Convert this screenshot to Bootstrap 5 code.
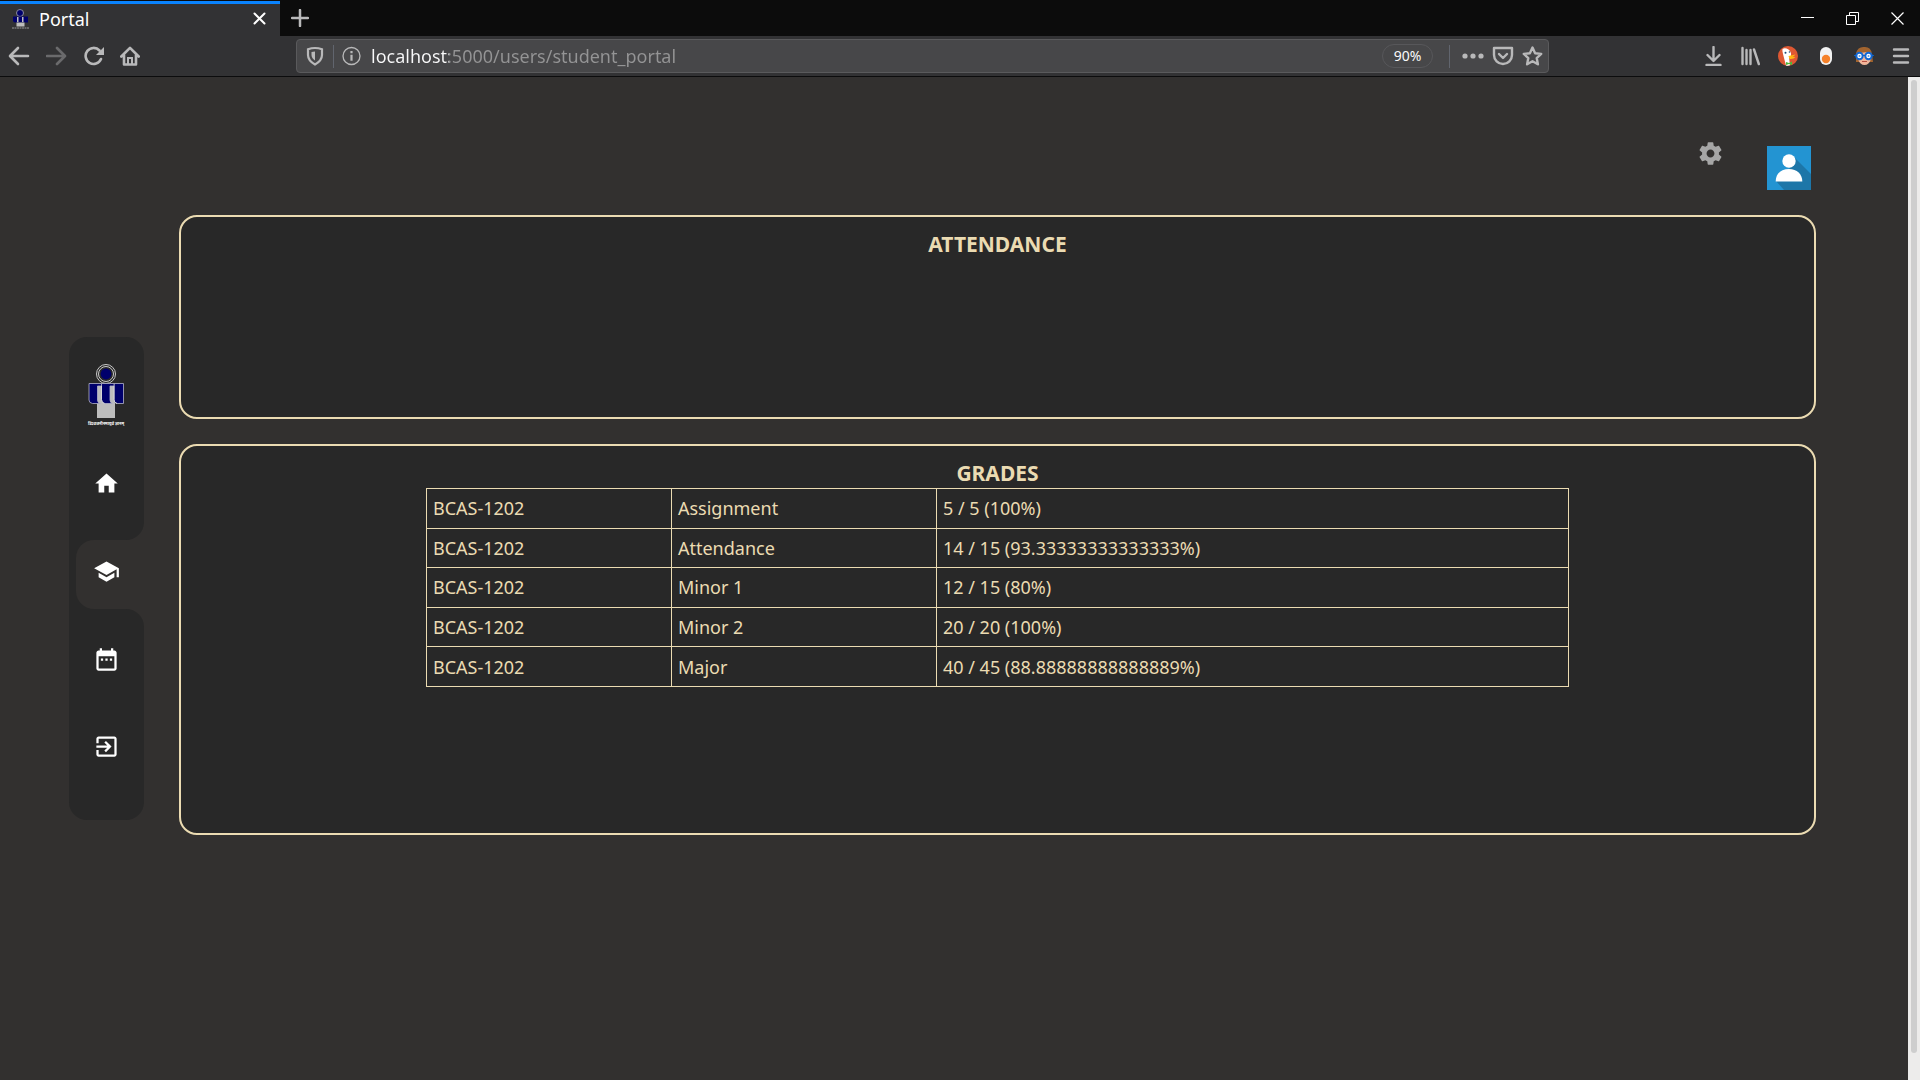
<!DOCTYPE html>
<html lang="en">
<head>
<meta charset="utf-8">
<meta name="viewport" content="width=device-width, initial-scale=1">
<title>Portal</title>
<link href="https://cdn.jsdelivr.net/npm/bootstrap@5.3.0/dist/css/bootstrap.min.css" rel="stylesheet">
<style>
  :root { --page: #32302f; --panel: #282828; --sand: #ebdbb2; --chrome: #323234; --glyph: #b9b9ba; }
  body { font-family: "Noto Sans", sans-serif; font-size: 18px; line-height: 24px; background: var(--page); color: var(--sand); }
  svg { display: block; flex: none; }
  button { background: none; border: 0; padding: 0; color: inherit; }

  /* browser chrome */
  .titlebar { height: 36px; background: #0c0c0c; color: #fff; }
  .tab-active { width: 280px; margin-top: 1px; border-top: 3px solid #0a84ff; background: var(--chrome); padding: 0 14px 3px 11px; }
  .tab-label { margin-left: 10px; }
  .tab-new { margin-left: 11px; color: var(--glyph); }
  .win-buttons { gap: 32px; padding-right: 16px; }
  .toolbar { height: 41px; background: var(--chrome); border-bottom: 1px solid #0c0c0d; color: var(--glyph); padding: 0 10px 0 8px; }
  .tool-nav { width: 288px; gap: 16px; }
  .urlbar { width: 1253px; height: 34px; background: #474749; border: 1px solid #5a5a5c; border-radius: 4px; padding: 0 5px 0 8px; }
  .rule { width: 1px; height: 23px; background: #61656e; }
  .url-input { border: 0; outline: 0; margin: 0 8px 0 9px; padding: 0; height: 28px; min-width: 0; color: transparent; caret-color: #fff;
    background: linear-gradient(to right, #f9f9fa 78px, #949495 78px); -webkit-background-clip: text; background-clip: text; }
  .zoom-pill { width: 51px; height: 24px; border: 1px solid #57575a; border-radius: 12px; font-size: 14px; line-height: 20px; color: #f9f9fa; }
  .tool-end { gap: 18px; }

  /* page */
  .portal { padding-left: 69px; }
  .side { width: 75px; flex: none; }
  .side a { height: 87px; color: #fff; }
  .side-top { background: var(--panel); border-radius: 18px 18px 18px 0; padding: 27px 0 13px; }
  .side-top .crest { margin-bottom: 14px; }
  .side-now { background: linear-gradient(to right, var(--panel) 50%, transparent 50%); padding-left: 7px; }
  .side-now a { height: 69px; background: var(--page); border-radius: 18px 0 0 18px; padding: 0 7px 6px 0; }
  .side-end { background: var(--panel); border-radius: 0 18px 18px 18px; padding: 7px 0 30px; }
  .board { margin: 0 92px 0 35px; }
  .board-tools { height: 138px; padding: 63px 5px 0 0; gap: 43px; color: #a6a6a6; }
  .board-tools .avatar { margin-top: 6px; }
  .panel { background: var(--panel); border: 2px solid var(--sand); border-radius: 18px; padding: 12px 16px; }
  .panel h2 { font-size: 21px; line-height: 30px; font-weight: 700; margin: 0; text-align: center; }
  .panel-attendance { min-height: 204px; margin-bottom: 25px; }
  .panel-grades { min-height: 391px; padding-left: 0; padding-right: 0; }
  .grades { width: 70%; height: 199px; table-layout: fixed; border-collapse: collapse; margin: 0 auto; }
  .grades td { border: 1px solid var(--sand); padding: 0 6px; }
  .col-course { width: 245px; }
  .col-work { width: 265px; }
  .scroll-track { width: 12px; flex: none; background: #edeceb; padding: 3px 3px 27px; }
  .scroll-thumb { background: #cecece; border-radius: 3px; }
</style>
</head>
<body class="vh-100 d-flex flex-column overflow-hidden">

<svg width="0" height="0" class="position-absolute" aria-hidden="true">
  <symbol id="crest" viewBox="0 0 40 62">
    <circle cx="20" cy="10" r="9.500" fill="#282828" stroke="#c9c9c9" stroke-width="1"/>
    <circle cx="20" cy="10" r="7.500" fill="none" stroke="#c9c9c9" stroke-width="1"/>
    <circle cx="20" cy="10" r="5.400" fill="#00006b"/>
    <path d="M11 22h18v32H11z" fill="#bdbdbd"/>
    <g fill="#00006b" stroke="#b4b4c8" stroke-width=".8">
      <path d="M28 19.500h9.500v20H31q-3-.5-3-3.500z"/>
      <path d="M15.500 19.500h12.500v2.500h-4v14q0 3 3 3.500h-8q-3.500-.5-3.500-3.500z"/>
      <path d="M3 19.500h12.500v2.500h-4v14q0 3 3 3.500H6.500Q3 39 3 36z"/>
    </g>
    <path d="M15.500 22v13.500q0 3.500 3 4M28 22v13.500q0 3.500 3 4" fill="none" stroke="#d8d8d8"/>
  </symbol>
</svg>

<header>
  <div class="titlebar d-flex">
    <div class="tab-active d-flex align-items-center">
      <svg width="18" height="20" viewBox="0 0 18 20"><circle cx="9" cy="4" r="3.500" fill="#00006b" stroke="#8b8b9c"/><path d="M2 7.500h15v6H4q-2 0-2-2z" fill="#00006b"/><path d="M5.500 13.500h8v4h-8zM6 8h1.500v5H6zM11 8h1.500v5H11z" fill="#bdbdbd"/><path d="M1 19h17" stroke="#999" stroke-dasharray="2 .5"/></svg>
      <span class="tab-label flex-grow-1">Portal</span>
      <button aria-label="Close tab"><svg width="13" height="13" viewBox="0 0 13 13"><path d="M1.500 1.500l10 10m0-10l-10 10" stroke="#fff" stroke-width="2" stroke-linecap="round"/></svg></button>
    </div>
    <button class="tab-new" aria-label="New tab"><svg width="18" height="18" viewBox="0 0 18 18"><path d="M9 1v16M1 9h16" stroke="currentColor" stroke-width="2.500" stroke-linecap="round"/></svg></button>
    <div class="win-buttons d-flex align-items-center ms-auto">
      <button aria-label="Minimize"><svg width="13" height="14" viewBox="0 0 13 14"><path d="M0 6.500h13" stroke="#fff"/></svg></button>
      <button aria-label="Restore"><svg width="13" height="13" viewBox="0 0 13 13"><path d="M.5 3.500h9v9h-9zM3.500 3.500v-3h9v9h-3" fill="none" stroke="#fff"/></svg></button>
      <button aria-label="Close window"><svg width="13" height="13" viewBox="0 0 13 13"><path d="M.5.5l12 12m0-12l-12 12" stroke="#fff" stroke-width="1.200"/></svg></button>
    </div>
  </div>

  <div class="toolbar d-flex align-items-center">
    <nav class="tool-nav d-flex align-items-center" aria-label="Browser">
      <button aria-label="Back"><svg width="22" height="20" viewBox="0 0 22 20"><path d="M20 10H2.500M10 2L2 10l8 8" fill="none" stroke="currentColor" stroke-width="2.600" stroke-linecap="round" stroke-linejoin="round"/></svg></button>
      <button aria-label="Forward"><svg width="22" height="20" viewBox="0 0 22 20" opacity=".42"><path d="M1 10h17.500M11 2l8 8-8 8" fill="none" stroke="currentColor" stroke-width="2.600" stroke-linecap="round" stroke-linejoin="round"/></svg></button>
      <button aria-label="Reload"><svg width="20" height="20" viewBox="0 0 20 20"><path d="M15.500 4.500A8 8 0 1 0 17 13" fill="none" stroke="currentColor" stroke-width="2.600" stroke-linecap="round"/><path d="M20 1v8h-8z" fill="currentColor"/></svg></button>
      <button aria-label="Home"><svg width="20" height="20" viewBox="0 0 20 20"><path d="M1.300 10.500L10 1.800l8.700 8.700M4 9v9.500h12V9" fill="none" stroke="currentColor" stroke-width="2.600" stroke-linecap="round" stroke-linejoin="round"/><path d="M8 18v-6h4v6" fill="none" stroke="currentColor" stroke-width="2"/></svg></button>
    </nav>

    <div class="urlbar d-flex align-items-center">
      <svg width="20" height="20" viewBox="0 0 20 20"><path d="M10 2q3.500 0 7 1.300V9q0 5.500-7 9.500-7-4-7-9.500V3.300Q6.500 2 10 2z" fill="none" stroke="currentColor" stroke-width="2.200"/><path d="M10 5.500v9Q6.500 12 6.500 9V6z" fill="currentColor"/></svg>
      <div class="rule ms-2 me-2"></div>
      <svg width="20" height="20" viewBox="0 0 20 20"><circle cx="9.500" cy="10" r="8.500" fill="none" stroke="currentColor" stroke-width="1.300"/><path d="M9.500 8.800v6M9.500 5v2.200" stroke="currentColor" stroke-width="2.200"/></svg>
      <input class="url-input flex-grow-1" type="text" value="localhost:5000/users/student_portal" aria-label="Address">
      <button class="zoom-pill me-3">90%</button>
      <div class="rule me-2"></div>
      <button class="ms-1" aria-label="Page actions"><svg width="22" height="20" viewBox="0 0 22 20"><g fill="currentColor"><circle cx="3" cy="10" r="2.600"/><circle cx="11" cy="10" r="2.600"/><circle cx="19" cy="10" r="2.600"/></g></svg></button>
      <button class="ms-2" aria-label="Save to Pocket"><svg width="22" height="20" viewBox="0 0 22 20"><path d="M2 2h18v7a9 9 0 0 1-18 0zM7 8l4 4 4-4" fill="none" stroke="currentColor" stroke-width="2.400" stroke-linejoin="round" stroke-linecap="round"/></svg></button>
      <button class="ms-2" aria-label="Bookmark"><svg width="21" height="20" viewBox="0 0 21 20"><path d="M10.500 1.500l2.600 5.700 6.100.7-4.500 4.200 1.200 6.200-5.400-3.100-5.400 3.100 1.200-6.200-4.500-4.200 6.100-.7z" fill="none" stroke="currentColor" stroke-width="2.400" stroke-linejoin="round"/></svg></button>
    </div>

    <div class="tool-end d-flex align-items-center ms-auto">
      <button aria-label="Downloads"><svg width="18" height="20" viewBox="0 0 18 20"><path d="M9.500 1v13M3.500 9l6 6 6-6M2.500 19h14" fill="none" stroke="currentColor" stroke-width="2.400" stroke-linecap="round" stroke-linejoin="round"/></svg></button>
      <button aria-label="Library"><svg width="20" height="20" viewBox="0 0 20 20"><path d="M2.500 2v16M6.500 4v14M10.500 4v14M14 3.500L18.800 18" fill="none" stroke="currentColor" stroke-width="2.400" stroke-linecap="round"/></svg></button>
      <button aria-label="Privacy"><svg width="20" height="20" viewBox="0 0 20 20"><circle cx="10" cy="10" r="10" fill="#de5833"/><path d="M4.500 3Q7 1.500 10.500 3.500q3 2 2.500 6l-2 2 1 7.800Q10 20 8 19.500 6 12 5 8 4 5 4.500 3z" fill="#fff"/><path d="M10.500 10l7-1.500q-1 1.500-3 2l3 .5q-2 2.500-6 2z" fill="#fdb913"/><path d="M8 16l3 1 3-1.500v3.500l-3-1-3 1z" fill="#4cba3c"/><circle cx="7.500" cy="6.700" r="1" fill="#234a75"/><circle cx="11.500" cy="6" r=".8" fill="#234a75"/></svg></button>
      <button class="px-1" aria-label="Toggle extension"><svg width="12" height="18" viewBox="0 0 12 18"><rect width="12" height="18" rx="6" fill="#f2f2f2"/><circle cx="6" cy="12" r="4.200" fill="#f5812a"/></svg></button>
      <button aria-label="Profile extension"><svg width="20" height="20" viewBox="0 0 20 20"><path d="M2 7Q4 0 11 1q6 0 7 7l1 8H2z" fill="#a2642f"/><path d="M4 8q6-3 13-1v6q-2 6-6.500 6T4 13z" fill="#f0b59a"/><path d="M8 15.500h5" stroke="#b94f42"/><path d="M0 9.500h20" stroke="#0b5fc2"/><g fill="#fff" stroke="#1268d3" stroke-width="2"><circle cx="5.500" cy="10" r="3.200"/><circle cx="14.500" cy="10" r="3.200"/></g><g fill="#5d9be6"><circle cx="5.500" cy="10" r="1"/><circle cx="14.500" cy="10" r="1"/></g></svg></button>
      <button aria-label="Menu"><svg width="18" height="20" viewBox="0 0 18 20"><path d="M2 3.500h14M2 10h14M2 16.500h14" stroke="currentColor" stroke-width="2.400" stroke-linecap="round"/></svg></button>
    </div>
  </div>
</header>

<div class="d-flex flex-grow-1">
  <div class="portal d-flex flex-grow-1">
    <nav class="side align-self-center" aria-label="Portal">
      <div class="side-top">
        <svg class="crest mx-auto" width="61" height="62" viewBox="0 0 61 62"><use href="#crest" x="10" width="40" height="62"/><text x="30" y="61" text-anchor="middle" font-size="4" font-weight="700" fill="#fff">विश्वजनीनमायुर्व ज्ञानम्</text></svg>
        <a class="d-flex align-items-center justify-content-center" href="#" aria-label="Home"><svg width="27" height="27" viewBox="0 0 24 24" fill="currentColor"><path d="M10 20v-6h4v6h5v-8h3L12 3 2 12h3v8z"/></svg></a>
      </div>
      <div class="side-now">
        <a class="d-flex align-items-center justify-content-center" href="#" aria-label="Grades" aria-current="page"><svg width="27" height="27" viewBox="0 0 24 24" fill="currentColor"><path d="M5 13.180v4L12 21l7-3.820v-4L12 17l-7-3.820zM12 3L1 9l11 6 9-4.910V17h2V9L12 3z"/></svg></a>
      </div>
      <div class="side-end">
        <a class="d-flex align-items-center justify-content-center" href="#" aria-label="Calendar"><svg width="27" height="27" viewBox="0 0 24 24" fill="currentColor"><path d="M9 11H7v2h2v-2zm4 0h-2v2h2v-2zm4 0h-2v2h2v-2zm2-7h-1V2h-2v2H8V2H6v2H5c-1.110 0-1.990.9-1.990 2L3 20c0 1.100.89 2 2 2h14c1.100 0 2-.9 2-2V6c0-1.100-.9-2-2-2zm0 16H5V9h14v11z"/></svg></a>
        <a class="d-flex align-items-center justify-content-center" href="#" aria-label="Log out"><svg width="27" height="27" viewBox="0 0 24 24" fill="currentColor"><path d="M10.090 15.590L11.500 17l5-5-5-5-1.410 1.410L12.670 11H3v2h9.670l-2.580 2.590zM19 3H5c-1.110 0-2 .9-2 2v4h2V5h14v14H5v-4H3v4c0 1.100.89 2 2 2h14c1.100 0 2-.9 2-2V5c0-1.100-.9-2-2-2z"/></svg></a>
      </div>
    </nav>

    <main class="board flex-grow-1">
      <div class="board-tools d-flex justify-content-end align-items-start">
        <button aria-label="Settings"><svg width="27" height="27" viewBox="0 0 24 24" fill="currentColor"><path d="M19.430 12.980c.04-.32.07-.64.07-.98s-.03-.66-.07-.98l2.110-1.650c.19-.15.24-.42.12-.64l-2-3.460c-.12-.22-.39-.3-.61-.22l-2.490 1c-.52-.4-1.080-.73-1.690-.98l-.38-2.650C14.460 2.180 14.250 2 14 2h-4c-.25 0-.46.18-.49.42l-.38 2.650c-.61.25-1.170.59-1.690.98l-2.490-1c-.23-.09-.49 0-.61.22l-2 3.460c-.13.22-.07.49.12.64l2.110 1.650c-.04.32-.07.65-.07.98s.03.66.07.98l-2.110 1.650c-.19.15-.24.42-.12.64l2 3.460c.12.22.39.3.61.22l2.490-1c.52.4 1.080.73 1.690.98l.38 2.650c.03.24.24.42.49.42h4c.25 0 .46-.18.49-.42l.38-2.650c.61-.25 1.170-.59 1.690-.98l2.490 1c.23.09.49 0 .61-.22l2-3.460c.12-.22.07-.49-.12-.64l-2.110-1.650zM12 15.500c-1.930 0-3.500-1.570-3.500-3.500s1.570-3.500 3.500-3.500 3.500 1.570 3.500 3.500-1.570 3.500-3.500 3.500z"/></svg></button>
        <button class="avatar" aria-label="Account"><svg width="44" height="44" viewBox="0 0 44 44"><path d="M0 0h44v44H0z" fill="#2394d2"/><path d="M27 11L44 28v16H17L9 35l14-13z" fill="#1d76a8"/><circle cx="22" cy="15" r="6.700" fill="#fff"/><path d="M8.700 35.500C8.700 28 14 23 22 23s13.300 5 13.300 12.500z" fill="#fff"/></svg></button>
      </div>

      <section class="panel panel-attendance">
        <h2>ATTENDANCE</h2>
      </section>

      <section class="panel panel-grades">
        <h2>GRADES</h2>
        <table class="grades">
          <colgroup><col class="col-course"><col class="col-work"><col></colgroup>
          <tbody>
            <tr><td>BCAS-1202</td><td>Assignment</td><td>5 / 5 (100%)</td></tr>
            <tr><td>BCAS-1202</td><td>Attendance</td><td>14 / 15 (93.33333333333333%)</td></tr>
            <tr><td>BCAS-1202</td><td>Minor 1</td><td>12 / 15 (80%)</td></tr>
            <tr><td>BCAS-1202</td><td>Minor 2</td><td>20 / 20 (100%)</td></tr>
            <tr><td>BCAS-1202</td><td>Major</td><td>40 / 45 (88.88888888888889%)</td></tr>
          </tbody>
        </table>
      </section>
    </main>
  </div>
  <div class="scroll-track d-flex flex-column" aria-hidden="true"><div class="scroll-thumb flex-grow-1"></div></div>
</div>

<script src="https://cdn.jsdelivr.net/npm/bootstrap@5.3.0/dist/js/bootstrap.bundle.min.js"></script>
</body>
</html>
